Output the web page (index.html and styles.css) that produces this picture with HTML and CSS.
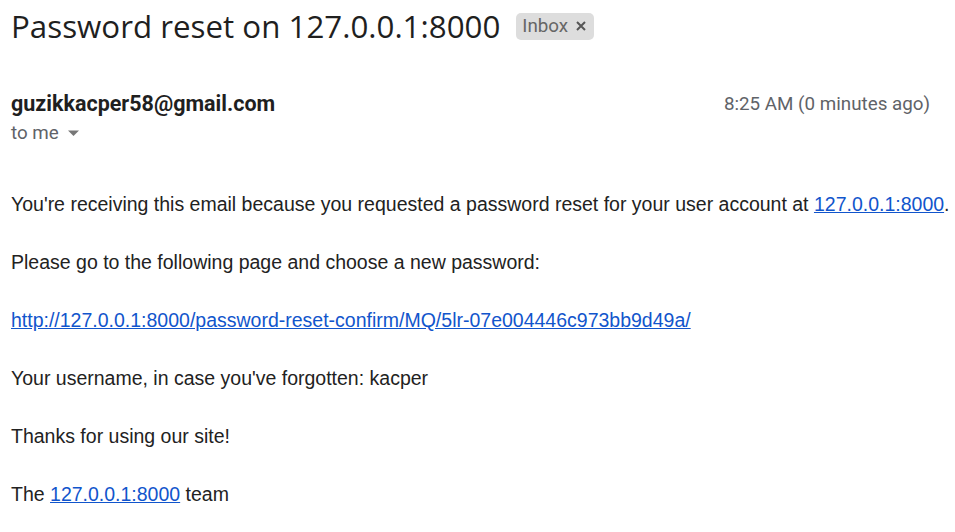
FILE: index.html
```html
<!DOCTYPE html>
<html>
<head>
<meta charset="utf-8">
<link rel="stylesheet" href="styles.css">
</head>
<body>
<div class="mail">
  <div class="subject-row">
    <h1 class="subject">Password reset on 127.0.0.1:8000</h1>
    <span class="chip">Inbox <svg class="chip-x" width="10" height="10" viewBox="0 0 10 10"><path d="M1 1L9 9M9 1L1 9" stroke="#555" stroke-width="2"/></svg></span>
  </div>
  <div class="head">
    <div class="from">
      <div class="sender">guzikkacper58@gmail.com</div>
      <div class="to">to me <svg class="caret" width="11" height="6" viewBox="0 0 11 6"><path d="M0 0.5h11L5.5 6z" fill="#777"/></svg></div>
    </div>
    <div class="time">8:25 AM (0 minutes ago)</div>
  </div>
  <div class="body">
    <p>You're receiving this email because you requested a password reset for your user account at <a href="#">127.0.0.1:8000</a>.</p>
    <p>Please go to the following page and choose a new password:</p>
    <p><a href="#">http://127.0.0.1:8000/password-reset-confirm/MQ/5lr-07e004446c973bb9d49a/</a></p>
    <p>Your username, in case you've forgotten: kacper</p>
    <p>Thanks for using our site!</p>
    <p>The <a href="#">127.0.0.1:8000</a> team</p>
  </div>
</div>
</body>
</html>
```
FILE: styles.css
```css
html, body {
  margin: 0;
  padding: 0;
  background: #fff;
  overflow: hidden;
}
.mail {
  padding: 0 25px 0 11px;
  font-family: Roboto, "Liberation Sans", Arial, sans-serif;
  color: #202124;
}
.subject-row {
  display: flex;
  align-items: center;
  gap: 16px;
  padding-top: 6px;
  height: 40px;
}
.subject {
  margin: 0;
  font-family: "Open Sans", Roboto, sans-serif;
  font-weight: 400;
  font-size: 31.3px;
  line-height: 40px;
  color: #1f1f1f;
}
.chip {
  display: inline-flex;
  align-items: center;
  gap: 8px;
  background: #ddd;
  color: #666;
  font-size: 18.8px;
  line-height: 27px;
  height: 27px;
  padding: 0 8px 0 6px;
  border-radius: 5px;
}
.chip-x {
  display: block;
}
.head {
  display: flex;
  justify-content: space-between;
  margin-top: 44px;
}
.sender {
  font-weight: 700;
  font-size: 21.5px;
  line-height: 28px;
  color: #1f1f1f;
}
.to {
  font-size: 18.8px;
  line-height: 30px;
  color: #5f6368;
  display: flex;
  align-items: center;
  gap: 9px;
}
.time {
  font-size: 18.8px;
  line-height: 28px;
  color: #5f6368;
}
.body {
  margin-top: 42px;
  font-family: "Liberation Sans", Arial, sans-serif;
  font-size: 19.5px;
  line-height: 29px;
  color: #222;
}
.body p {
  margin: 0 0 29px;
  white-space: nowrap;
}
.body a {
  color: #1155cc;
}
```
